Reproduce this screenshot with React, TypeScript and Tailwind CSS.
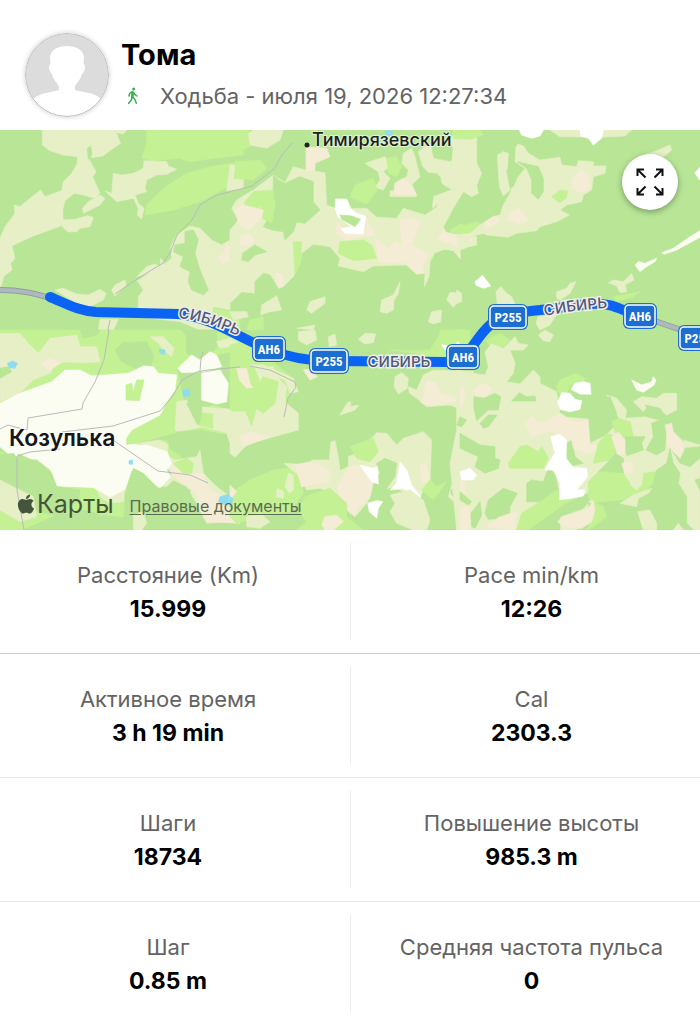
import { FaApple } from "react-icons/fa";

const FOREST = "#b8e696";
const BRIGHT = "#c3f194";
const MEADOW = "#e6efc6";
const SAND = "#f4ecd4";
const TOWN = "#fcfdf2";
const SNOW = "#ffffff";
const WATER = "#8fdcf0";

type Shape = [fill: string, points: string];
type Tile = { x: number; y: number; shapes: Shape[] };

/* Land cover, in tiles of 240 x 200 map units; points are in thirds of a unit. */
const tiles: Tile[] = [
  {
    x: 0,
    y: 0,
    shapes: [
      [BRIGHT, "440,0 730,0 730,75 640,85 570,95 540,85 460,92 425,85 440,40"],
      [BRIGHT, "435,255 440,225 490,175 560,130 640,108 700,100 685,170 600,215 520,240"],
      [MEADOW, "127,0 345,0 362,40 330,62 308,78 275,83 262,60 268,90 288,125 278,140 300,190 283,205 250,195 222,190 195,212 188,240 190,285 150,300 100,318 62,335 36,348 45,385 32,400 36,420 12,438 0,480 0,325 15,290 45,250 42,225 60,230 90,205 122,180 135,200 185,182 190,155 215,130 232,100 232,80 190,75 150,62 127,45"],
      [FOREST, "262,55 272,48 276,75 265,88"],
      [MEADOW, "250,250 248,235 265,215 300,195 315,205 300,225 270,240"],
      [MEADOW, "185,270 188,292 205,306 230,305 240,295 270,290 280,262 262,257 225,268"],
      [MEADOW, "315,183 335,190 340,130 365,135 400,130 430,115 432,92 500,95 505,108 530,118 500,133 470,135 440,150 435,175 440,185 405,195 415,220 432,235 425,268 412,255 415,235 400,205 350,215"],
      [MEADOW, "345,0 380,0 370,12 350,8"],
      [MEADOW, "690,105 712,110 700,140 730,145 730,175 680,182"],
      [MEADOW, "412,452 450,430 490,405 515,385 512,350 530,315 570,288 600,295 635,330 665,345 690,330 695,300 730,270 730,480 690,520 690,540 640,530 635,560 660,600 600,600 540,575 415,560 415,500 430,480"],
      [FOREST, "555,305 580,300 595,330 585,370 600,420 625,480 610,495 575,480 565,455 570,425 540,410 550,380 520,365 525,345 555,340"],
      [SAND, "655,380 675,365 680,340 692,360 695,390 665,400"],
      [MEADOW, "335,480 345,465 375,450 378,465 345,498"],
      [MEADOW, "410,440 440,410 465,402 480,410 482,385 490,395 490,408 450,430"],
      [MEADOW, "165,480 190,475 230,492 265,495 300,478 318,490 310,510 270,530 230,520"],
      [MEADOW, "300,568 355,568 340,600 295,600"],
      [MEADOW, "705,220 720,218 725,255 703,250"],
      [BRIGHT, "640,535 720,550 720,600 660,600"],
    ],
  },
  {
    x: 230,
    y: 0,
    shapes: [
      [BRIGHT, "-25,0 55,0 60,50 20,65 -25,75"],
      [BRIGHT, "15,95 90,90 110,115 70,150 10,145"],
      [MEADOW, "55,10 70,0 160,0 150,30 110,55 60,45"],
      [MEADOW, "0,105 15,105 10,145 0,150"],
      [MEADOW, "0,300 25,270 5,235 20,210 70,180 130,135 165,158 190,110 228,120 285,128 290,225 320,237 410,235 440,262 500,265 520,235 585,255 620,232 625,205 665,185 720,170 700,185 670,235 640,290 650,310 740,320 740,345 718,350 690,360 692,388 670,362 645,358 615,368 600,395 597,440 583,470 585,430 560,432 530,405 430,408 400,425 325,408 330,385 300,350 250,343 215,370 210,400 190,440 160,470 135,465 110,430 90,440 75,490 35,485 0,515"],
      [FOREST, "130,135 145,150 165,160 210,140 250,155 250,215 270,240 225,280 200,275 190,305 165,330 160,305 125,300 100,290 130,240"],
      [BRIGHT, "45,215 70,185 130,180 135,230 125,280 95,265 90,225 75,250 45,240"],
      [FOREST, "75,470 75,455 100,430 120,435 138,465 145,500 100,510 75,495"],
      [MEADOW, "405,100 465,80 485,105 460,125 480,145 460,180 435,172 450,150 445,125"],
      [MEADOW, "480,200 480,182 500,185 495,160 530,140 535,120 515,100 520,70 545,55 555,80 565,120 570,140 545,165 560,200"],
      [MEADOW, "565,65 600,40 610,85 660,95 680,85 660,30 680,0 740,0 740,180 665,190 625,215 610,235 590,205 660,180 630,155 625,130 580,125 575,100"],
      [FOREST, "575,108 600,135 630,140 635,165 662,178 610,198 605,228 570,225"],
      [SAND, "490,195 495,160 520,145 545,165 560,195"],
      [SAND, "228,50 290,55 300,80 255,100 255,122 228,124"],
      [SAND, "15,235 40,225 100,240 95,265 55,300 25,280"],
      [SAND, "30,320 60,310 75,335 55,350 30,345"],
      [SAND, "320,275 355,310 405,310 410,270 435,315 345,330 318,310"],
      [SAND, "435,320 470,355 500,335 515,345 510,270 540,265 575,275 560,300 545,345 600,375 580,405 580,430 560,432 525,400 445,395"],
      [SAND, "640,305 700,318 730,330 690,350 640,335 620,325"],
      [SAND, "135,430 160,430 160,470 145,475"],
      [BRIGHT, "360,200 375,165 430,145 442,180 410,222"],
      [BRIGHT, "330,335 400,330 425,345 440,385 370,392 325,370"],
      [BRIGHT, "190,335 215,335 212,400 195,430"],
      [BRIGHT, "660,300 690,282 725,290 725,312 665,310"],
      [BRIGHT, "470,85 500,80 515,110 500,140 475,130"],
      [SNOW, "317,207 350,207 362,235 378,250 407,258 400,312 345,310 333,296 365,290 325,262 315,235"],
      [FOREST, "330,255 365,258 392,268 375,290 335,268"],
      [FOREST, "38,370 75,345 110,365 75,375 55,395 35,390"],
      [MEADOW, "230,540 240,515 285,500 285,520 245,550"],
      [MEADOW, "450,545 455,510 490,495 510,455 505,490 492,510 490,540 470,550"],
      [MEADOW, "595,575 605,545 635,540 632,575 610,582"],
      [MEADOW, "650,510 660,487 693,490 690,510 670,532"],
      [MEADOW, "92,555 95,525 140,497 155,540 120,545"],
      [MEADOW, "0,545 50,545 55,560 10,570"],
      [BRIGHT, "60,570 100,560 100,600 50,600"],
      [MEADOW, "200,595 255,585 250,600"],
      [WATER, "465,5 475,0 488,5 485,18 468,15"],
    ],
  },
  {
    x: 460,
    y: 0,
    shapes: [
      [BRIGHT, "-20,0 60,0 70,15 30,28 -20,25"],
      [MEADOW, "-20,50 35,60 45,90 65,130 50,165 55,190 35,200 -5,175 -30,150"],
      [BRIGHT, "0,290 50,275 65,285 20,310 0,315"],
      [MEADOW, "270,0 515,0 495,18 420,22 300,20"],
      [SNOW, "178,0 250,0 240,18 215,25 185,15"],
      [SNOW, "360,0 430,0 425,25 400,45 385,25 362,18"],
      [MEADOW, "112,75 130,65 145,70 142,120 150,180 130,198 118,170"],
      [MEADOW, "168,50 175,42 190,48 205,70 240,90 300,82 305,105 350,110 355,92 400,95 400,108 438,108 435,130 400,140 395,180 370,195 365,215 320,225 300,240 328,255 290,275 240,290 230,302 170,310 145,322 80,315 70,310 30,320 20,345 0,360 -10,315 30,310 60,285 100,260 120,255 130,225 150,190 160,160 195,115 165,95"],
      [FOREST, "172,95 235,110 250,145 250,185 235,208 215,190 215,150 200,115"],
      [FOREST, "140,120 165,100 180,120 160,170 150,170"],
      [BRIGHT, "275,200 300,180 323,182 318,205 300,218"],
      [SAND, "335,150 365,115 390,140 390,175 365,188 335,175"],
      [SAND, "142,270 150,245 180,235 205,270 185,285"],
      [SAND, "75,275 105,258 120,270 100,290 78,295"],
      [MEADOW, "560,72 590,62 630,45 635,60 610,80"],
      [SNOW, "45,455 68,436 92,468 70,475 48,465"],
      [MEADOW, "108,485 122,470 140,490 155,500 165,522 112,525"],
      [MEADOW, "290,505 290,485 320,475 330,460 348,455 330,490 300,510"],
      [MEADOW, "235,560 290,552 270,585 240,600 228,580"],
      [MEADOW, "445,458 460,450 490,455 505,440 515,430 522,450 495,465 500,485 480,488 470,468"],
      [TOWN, "525,405 535,395 555,400 590,385 585,395 560,410 540,425"],
      [TOWN, "605,368 640,355 690,320 720,302 720,322 650,360 612,373"],
      [BRIGHT, "460,500 540,485 520,500 470,515"],
      [SNOW, "705,128 720,112 720,150 712,140"],
      [MEADOW, "-10,480 5,490 5,515 -10,520"],
    ],
  },
  {
    x: 0,
    y: 200,
    shapes: [
      [BRIGHT, "0,0 720,0 720,60 600,85 530,115 560,250 640,225 720,250 720,310 520,310 390,345 180,200 0,220"],
      [FOREST, "545,0 650,0 650,55 605,90 560,70 560,20"],
      [FOREST, "345,60 370,38 440,35 462,80 450,115 415,120 365,95"],
      [MEADOW, "0,10 60,10 85,40 115,70 150,25 230,15 240,50 290,50 300,95 250,100 190,100 150,130 100,150 60,190 0,215"],
      [SAND, "123,100 145,85 180,95 175,110 145,122"],
      [FOREST, "0,115 25,110 35,125 0,145"],
      [FOREST, "240,0 300,0 290,15 250,25"],
      [BRIGHT, "150,145 160,115 190,98 230,100 290,100 285,130 210,140"],
      [MEADOW, "450,20 490,20 522,55 515,80 490,60 475,40"],
      [MEADOW, "650,35 690,25 720,40 720,60 690,50 660,55"],
      [TOWN, "0,220 60,190 155,155 195,120 240,120 275,138 385,130 430,108 460,110 475,130 530,135 525,180 500,215 480,255 395,300 378,325 378,345 410,342 440,355 500,355 512,400 490,425 512,440 480,475 445,450 395,420 375,480 330,505 280,475 170,470 155,430 125,400 55,370 45,390 0,350"],
      [BRIGHT, "410,345 500,330 510,360 540,375 545,395 510,385 500,345"],
      [TOWN, "533,115 575,75 600,90 630,65 650,75 665,110 610,125 545,128"],
      [TOWN, "605,130 660,120 685,160 680,215 650,222 605,210"],
      [BRIGHT, "378,165 395,160 400,185 410,150 432,150 418,212 378,210"],
      [MEADOW, "530,215 560,210 575,250 590,285 640,300 640,250 590,245 600,230 720,240 720,350 690,340 680,310 610,290 540,305 525,300"],
      [FOREST, "560,220 605,215 605,255 595,285 580,260"],
      [FOREST, "505,330 535,305 600,300 650,310 720,360 720,500 650,500 640,460 610,430 590,400 595,365 560,360 520,345"],
      [MEADOW, "415,340 480,330 505,345 500,375 525,390 590,380 600,360 610,430 650,470 690,500 720,570 620,580 590,520 560,470 520,450 490,480 490,460 515,430 500,410 490,360"],
      [SAND, "500,395 550,430 610,430 630,480 690,510 700,540 640,560 600,540 590,490 560,465 520,440"],
      [TOWN, "410,345 440,345 500,365 515,400 500,420 512,440 480,475 470,430 410,400"],
      [BRIGHT, "520,400 560,385 580,400 575,430 550,430"],
      [FOREST, "390,470 400,415 430,430 470,470 440,480"],
      [BRIGHT, "0,365 45,390 110,390 150,420 170,470 280,475 330,505 375,490 370,560 330,600 0,600"],
      [FOREST, "0,375 40,370 55,390 110,390 155,430 170,470 240,480 235,510 180,560 100,540 70,490 0,450"],
      [MEADOW, "0,450 40,470 100,500 110,560 60,575 0,540"],
      [MEADOW, "290,480 330,505 375,480 370,515 330,520 300,500"],
      [FOREST, "70,600 160,560 260,540 300,555 385,565 430,545 440,600"],
      [FOREST, "375,490 450,480 530,465 570,480 570,560 530,600 440,600 430,545 380,530"],
      [MEADOW, "400,555 430,545 440,580 425,600 400,600"],
      [SAND, "600,540 650,555 720,545 720,580 620,575"],
      [WATER, "22,100 38,93 52,100 45,115 28,113"],
      [WATER, "478,58 495,60 495,73 480,70"],
      [WATER, "548,180 568,178 570,197 550,200"],
      [WATER, "387,392 398,390 398,403 387,402"],
      [WATER, "660,500 690,492 697,515 675,525 655,515"],
    ],
  },
  {
    x: 230,
    y: 200,
    shapes: [
      [BRIGHT, "0,45 60,30 130,95 170,130 195,150 170,220 120,235 65,280 0,240"],
      [MEADOW, "60,105 100,105 190,145 205,185 180,190 165,150 100,125"],
      [SAND, "20,115 50,115 60,160 68,172 50,175 28,150"],
      [MEADOW, "75,115 130,110 150,150 170,170 165,215 205,250 205,300 150,315 80,335 50,345 15,382 0,370 0,245 45,245 65,290 80,240 75,200 90,150"],
      [BRIGHT, "75,180 100,140 145,155 135,220 100,250 70,230"],
      [SAND, "30,320 60,305 120,320 40,350"],
      [MEADOW, "205,5 255,0 260,30 230,45 205,30"],
      [MEADOW, "295,20 315,12 320,45 298,50"],
      [MEADOW, "385,28 405,10 437,12 430,38 405,42"],
      [SAND, "220,120 240,118 262,140 240,150"],
      [MEADOW, "330,255 352,218 362,215 362,230 386,225 375,240"],
      [MEADOW, "492,170 495,140 515,128 535,145 532,175 505,192"],
      [BRIGHT, "480,60 600,60 630,10 640,45 720,70 720,0 670,0 690,30 650,90 560,70"],
      [SNOW, "635,45 655,25 680,25 690,45 645,60"],
      [MEADOW, "535,170 560,180 580,135 610,120 730,125 730,290 700,320 685,295 715,270 700,240 660,225 590,230 560,205 538,190"],
      [SAND, "575,220 590,150 620,160 630,190 700,210 610,228"],
      [BRIGHT, "0,490 60,450 130,420 190,412 215,450 220,490 180,545 100,560 20,580 0,560"],
      [MEADOW, "162,400 235,405 245,390 298,390 300,365 303,335 315,332 325,380 330,422 355,410 355,380 380,370 390,350 430,320 440,308 470,310 500,345 520,325 580,305 605,330 600,450 580,480 570,505 540,500 520,485 490,470 460,480 430,485 410,520 380,555 360,550 330,500 270,475 230,480 210,440"],
      [SAND, "195,405 240,395 300,420 300,455 215,470"],
      [SAND, "320,475 355,410 395,405 440,430 430,480 405,520 385,530 375,560 350,540 330,505"],
      [BRIGHT, "360,350 430,325 445,365 420,395 380,385"],
      [FOREST, "440,400 465,385 500,400 495,440 470,475 440,520 420,515 430,465 450,430"],
      [SNOW, "390,405 430,415 442,410 445,462 425,455"],
      [SNOW, "480,480 500,460 510,395 530,420 545,465 572,500 560,505 520,475"],
      [SNOW, "413,520 440,512 458,515 445,535 440,565 418,545"],
      [SAND, "570,400 590,405 600,450 575,460"],
      [BRIGHT, "575,480 600,450 620,470 650,455 610,510"],
      [MEADOW, "480,495 540,480 580,510 600,570 590,600 550,600 500,580 480,545 495,520"],
      [MEADOW, "655,500 665,465 690,460 680,370 700,355 740,370 740,600 690,590 700,540"],
      [FOREST, "662,480 680,470 715,495 712,525 665,495"],
      [SNOW, "685,418 740,415 735,450 700,445"],
      [MEADOW, "165,470 175,430 190,435 190,480 178,490"],
      [SAND, "0,465 20,485 0,510"],
      [MEADOW, "138,500 142,475 162,485 160,505"],
      [BRIGHT, "205,540 225,500 300,475 350,520 350,560 400,600 200,600 230,575"],
      [SAND, "275,585 285,560 320,555 340,575 310,600 285,600"],
      [MEADOW, "50,560 90,550 120,575 90,595 50,590"],
      [WATER, "0,500 8,505 5,530 0,530"],
    ],
  },
  {
    x: 460,
    y: 200,
    shapes: [
      [BRIGHT, "-60,0 20,0 -20,50 -60,40"],
      [BRIGHT, "80,30 120,10 150,30 130,50 90,50"],
      [MEADOW, "-10,120 40,130 75,135 85,110 75,65 95,42 130,55 165,20 175,40 205,45 190,60 150,60 165,100 160,130 140,155 180,162 220,120 240,140 240,160 290,185 300,250 390,265 390,340 440,315 480,270 440,195 470,205 500,240 495,265 560,260 620,275 670,330 720,345 720,600 -10,600 -30,400 -10,300"],
      [FOREST, "300,245 340,230 380,205 450,200 470,250 400,330 385,330 385,265 320,260"],
      [FOREST, "635,360 720,350 720,385 690,410 660,400"],
      [FOREST, "42,200 70,205 105,190 122,200 115,240 85,240 50,272 42,235"],
      [FOREST, "155,213 178,188 200,200 225,198 228,213"],
      [FOREST, "60,280 85,255 112,255 85,290 70,295"],
      [FOREST, "0,310 60,345 105,350 105,385 120,390 115,415 75,430 45,410 55,380 0,355"],
      [FOREST, "0,260 20,270 5,290 -10,285"],
      [BRIGHT, "145,400 180,350 200,345 235,365 245,350 265,385 250,415 150,415"],
      [FOREST, "200,460 215,450 250,455 265,415 285,430 300,505 270,515 200,515"],
      [FOREST, "75,550 85,510 130,475 172,490 150,530 148,565 85,568"],
      [FOREST, "32,550 60,515 65,555 45,595 35,590"],
      [FOREST, "0,485 35,515 25,525 0,510"],
      [BRIGHT, "170,600 185,550 240,515 290,480 320,510 385,500 380,520 250,570 210,600"],
      [FOREST, "205,600 250,570 320,520 385,490 390,510 370,535 300,560 300,600"],
      [FOREST, "315,345 335,330 345,380 370,400 325,410"],
      [SAND, "195,285 215,255 235,280 265,270 300,250 340,275 385,270 390,350 405,340 415,360 380,370 340,355 335,330 290,320 280,300 215,320"],
      [SAND, "40,180 70,160 95,175 80,200 45,195"],
      [SAND, "0,170 15,180 10,225 0,230"],
      [SAND, "0,450 15,455 15,490 0,480"],
      [SAND, "0,530 30,530 30,600 0,600"],
      [SAND, "75,590 120,560 170,545 165,600 130,600"],
      [MEADOW, "235,15 255,0 280,15 270,35 250,32"],
      [BRIGHT, "290,170 300,150 345,130 375,145 370,160 330,165 320,190 295,190"],
      [SNOW, "333,178 345,160 370,155 390,160 393,193 360,192"],
      [SNOW, "293,215 305,188 330,190 345,208 365,212 360,238 330,245 300,238"],
      [SNOW, "272,320 298,313 320,330 318,385 340,412 380,415 383,440 350,480 375,480 370,498 298,510 300,460 280,420 255,420 268,395 285,370"],
      [SNOW, "0,425 30,415 50,435 40,450 5,450"],
      [TOWN, "515,150 545,165 575,155 580,140 588,150 582,165 550,187 530,180"],
      [FOREST, "500,235 560,225 600,255 640,280 670,330 670,360 640,360 620,300 600,270 560,260 545,230"],
      [MEADOW, "520,215 545,200 590,205 610,190 650,190 650,240 620,255 600,240 565,225 550,245"],
      [FOREST, "555,225 600,235 615,258 575,255"],
      [BRIGHT, "415,340 440,310 470,320 455,275 475,265 510,275 520,320 500,330 500,370 460,370 450,390 400,400"],
      [FOREST, "495,320 555,320 545,340 550,360 500,377"],
      [FOREST, "575,280 600,270 620,290 615,360 590,375 558,360 580,320"],
      [SAND, "455,320 475,305 495,330 495,370 475,380"],
      [SAND, "615,285 635,280 640,305 670,335 672,360 660,385 625,350 620,310"],
      [FOREST, "415,425 450,390 465,370 490,385 490,430 450,430"],
      [BRIGHT, "385,500 385,455 415,425 490,430 520,475 550,430 590,425 580,460 540,500 480,520 400,515"],
      [MEADOW, "510,430 550,430 545,465 530,480 512,465"],
      [SAND, "485,400 520,395 515,430 495,430"],
      [FOREST, "385,520 480,512 540,500 580,460 590,420 620,400 630,355 640,400 660,430 655,460 680,500 680,580 700,600 350,600 400,575"],
      [BRIGHT, "400,515 430,530 440,560 400,590 380,600 400,560"],
      [SAND, "293,575 310,558 350,550 385,535 400,510 405,540 395,575 365,595 310,590"],
      [MEADOW, "480,520 520,495 575,475 565,490 535,505 530,530"],
      [MEADOW, "533,545 570,540 590,580 590,600 550,600"],
      [MEADOW, "640,600 655,580 670,600"],
      [FOREST, "705,450 720,445 720,480"],
    ],
  },
];

function LandCover() {
  return (
    <g>
      <rect width="700" height="400" fill={FOREST} />
      {tiles.map((tile) => (
        <g key={`${tile.x}-${tile.y}`} transform={`translate(${tile.x} ${tile.y}) scale(0.33333)`}>
          {tile.shapes.map(([fill, points], i) => (
            <polygon key={i} points={points} fill={fill} stroke={fill} strokeWidth="2" strokeLinejoin="round" />
          ))}
        </g>
      ))}
    </g>
  );
}

function Roads() {
  return (
    <g fill="none" stroke="#b9bbbd" strokeWidth="1">
      <path d="M292 13 L282 25 L274 39 L252 56 L237 60 L217 65 L200 75 L192 90 L177 105 L170 123 L163 133 L137 149 L115 164" />
      <path d="M109 200 L104 230 L95 252 L83 273 L82 279 L28 288 L27 300 L8 295 L0 299" />
      <path d="M62 302 L113 296 L160 281 L172 267 L182 250 L197 242 L208 240 L240 237" />
      <path d="M200 241 L201 229 L203 222" />
      <path d="M110 308 L158 341 L190 345 L208 353" />
      <path d="M17 326 L30 322 L60 319 M17 326 L17 360 L24 400" />
      <path d="M250 236 L270 240 L295 252 L296 257 L288 268 L284 287" />
      <path d="M110 190 L108 200" />
      <path d="M0 160 C20 160 33 163 50 168" stroke="#929da3" strokeWidth="6" />
      <path d="M0 160 C20 160 33 163 50 168" stroke="#aeb8bd" strokeWidth="4" />
      <path d="M652 190 L690 203" stroke="#929da3" strokeWidth="6" />
      <path d="M652 190 L690 203" stroke="#aeb8bd" strokeWidth="4" />
    </g>
  );
}

function Shield({ x, y, width, label }: { x: number; y: number; width: number; label: string }) {
  return (
    <g transform={`translate(${x} ${y})`}>
      <rect x={-width / 2} y="-13" width={width} height="26" rx="6" fill="#1c6fd0" />
      <rect x={-width / 2 + 2} y="-11" width={width - 4} height="22" rx="4" fill="#1c6fd0" stroke="#fff" strokeWidth="1.5" />
      <text
        y="5"
        textAnchor="middle"
        className="fill-white font-['Liberation_Sans_Narrow','Roboto_Condensed',Roboto,sans-serif] text-[13px] font-bold"
      >
        {label}
      </text>
    </g>
  );
}

const roadName =
  "fill-[#53567c] stroke-[#eef0ea] stroke-[3px] [paint-order:stroke] font-[Inter,sans-serif] text-[15px] font-medium";

function RouteMap() {
  return (
    <svg
      viewBox="0 0 700 400"
      preserveAspectRatio="xMidYMid slice"
      className="block h-[400px] w-full"
      role="img"
      aria-label="Карта маршрута"
    >
      <LandCover />
      <Roads />
      <path
        d="M50 167 C65 173 78 181 96 182 L178 184 C215 188 238 208 268 219 C285 226 305 231 330 231 L448 232 C472 232 474 202 500 188 C520 180 555 179 590 174 C612 172 622 181 640 186"
        fill="none"
        stroke="#0a63f2"
        strokeWidth="10"
        strokeLinecap="round"
        strokeLinejoin="round"
      />
      <defs>
        <path id="name-west" d="M178 188 C200 190 220 197 246 210" />
        <path id="name-east" d="M545 186 C565 182 590 178 616 178" />
      </defs>
      <text className={roadName}>
        <textPath href="#name-west">СИБИРЬ</textPath>
      </text>
      <text x="399" y="237" textAnchor="middle" className={roadName}>
        СИБИРЬ
      </text>
      <text className={roadName}>
        <textPath href="#name-east">СИБИРЬ</textPath>
      </text>
      <Shield x={269} y={219} width={34} label="АН6" />
      <Shield x={329} y={231} width={40} label="Р255" />
      <Shield x={463} y={227} width={34} label="АН6" />
      <Shield x={508} y={187} width={40} label="Р255" />
      <Shield x={640} y={186} width={34} label="АН6" />
      <Shield x={698} y={208} width={40} label="Р255" />
      <circle cx="307" cy="15" r="2.5" fill="#1d2a1b" />
      <text
        x="312"
        y="16"
        className="fill-[#1c1f1c] stroke-white/60 stroke-2 [paint-order:stroke] font-[Inter,sans-serif] text-[18px] font-medium"
      >
        Тимирязевский
      </text>
      <text
        x="9"
        y="316"
        className="fill-[#161616] stroke-white/70 stroke-2 [paint-order:stroke] font-[Inter,sans-serif] text-[23px] font-semibold"
      >
        Козулька
      </text>
    </svg>
  );
}

function Avatar() {
  return (
    <svg
      viewBox="0 0 84 84"
      className="size-[84px] shrink-0 rounded-full shadow-[0_0_5px_rgba(0,0,0,0.2)]"
      role="img"
      aria-label="Тома"
    >
      <defs>
        <clipPath id="avatar-clip">
          <circle cx="42" cy="42" r="41" />
        </clipPath>
      </defs>
      <circle cx="42" cy="42" r="41" fill="#dcdcdc" />
      <path
        clipPath="url(#avatar-clip)"
        fill="#fff"
        d="M42 13 C51 13 59 17 59 25 L58.500 31 C61 32 60 39 57 41 C55 48 51 50 50 54 L50 57 C55 59 70 59 76 66 L84 84 L0 84 L8 66 C16 59 29 59 34 57 L34 54 C32 49 28 47 27 41 C24 39 23 32 25.500 31 L25 25 C25 17 33 13 42 13Z"
      />
      <circle cx="42" cy="42" r="41.500" fill="none" stroke="#a8a8a8" strokeWidth="0.800" />
    </svg>
  );
}

function WalkIcon() {
  return (
    <svg
      viewBox="0 0 60 54"
      className="h-[18px] w-5"
      fill="none"
      stroke="#38b24c"
      strokeWidth="4.500"
      strokeLinecap="round"
      strokeLinejoin="round"
      aria-hidden="true"
    >
      <circle cx="32" cy="6" r="4.500" fill="#38b24c" stroke="none" />
      <path d="M29 16 L28 30" strokeWidth="8" />
      <path d="M27 15 L20 19 L18 27" />
      <path d="M32 17 L36 23 L42 27" />
      <path d="M27 31 L25 39 L17 49" />
      <path d="M30 31 L36 38 L40 49" />
    </svg>
  );
}

function ExpandIcon() {
  return (
    <svg viewBox="0 0 28 28" className="size-7" fill="none" stroke="#111" strokeWidth="2" aria-hidden="true">
      <path d="M8 1.500H1.500V8M1.500 1.500L9.500 9.500" />
      <path d="M20 1.500H26.500V8M26.500 1.500L18.500 9.500" />
      <path d="M8 26.500H1.500V20M1.500 26.500L9.500 18.500" />
      <path d="M20 26.500H26.500V20M26.500 26.500L18.500 18.500" />
    </svg>
  );
}

type Stat = { label: string; value: string };

const rows: [Stat, Stat][] = [
  [
    { label: "Расстояние (Km)", value: "15.999" },
    { label: "Pace min/km", value: "12:26" },
  ],
  [
    { label: "Активное время", value: "3 h 19 min" },
    { label: "Cal", value: "2303.3" },
  ],
  [
    { label: "Шаги", value: "18734" },
    { label: "Повышение высоты", value: "985.3 m" },
  ],
  [
    { label: "Шаг", value: "0.85 m" },
    { label: "Средняя частота пульса", value: "0" },
  ],
];

function StatCell({ stat, className }: { stat: Stat; className: string }) {
  return (
    <div className={`pt-[15px] pb-3.5 text-center ${className}`}>
      <dt className="text-[22px] leading-[34px] text-[#636363]">{stat.label}</dt>
      <dd className="text-[23px] leading-[34px] font-bold text-black">{stat.value}</dd>
    </div>
  );
}

export default function App() {
  return (
    <main className="min-h-screen bg-white font-[Inter,'Noto_Sans',sans-serif]">
      <header className="flex items-center gap-3 px-[25px] pt-[33px] pb-[13px]">
        <Avatar />
        <div>
          <h1 className="text-[29px] leading-[42px] font-bold text-black">Тома</h1>
          <p className="flex items-center gap-[17px] pl-0.5 text-[22px] leading-10 text-[#636363]">
            <WalkIcon />
            Ходьба - июля 19, 2026 12:27:34
          </p>
        </div>
      </header>

      <section className="relative overflow-hidden" aria-label="Маршрут">
        <RouteMap />
        <button
          type="button"
          aria-label="Развернуть карту"
          className="absolute top-6 right-[22px] flex size-14 items-center justify-center rounded-full bg-white shadow-[0_2px_6px_rgba(0,0,0,0.35)]"
        >
          <ExpandIcon />
        </button>
        <div className="absolute bottom-2 left-[15px] flex items-center gap-4 text-[#46543c]">
          <span className="flex items-center text-[25px] leading-9">
            <FaApple className="size-[22px]" aria-hidden="true" />
            Карты
          </span>
          <a href="#legal" className="pt-1 text-[16px] leading-6 text-[#5c6b50] underline underline-offset-2">
            Правовые документы
          </a>
        </div>
      </section>

      <dl>
        {rows.map(([left, right], i) => (
          <div
            key={left.label}
            className={`grid grid-cols-2 py-[13px] ${i === 0 ? "border-b border-[#cfcfcf]" : i < rows.length - 1 ? "border-b border-[#e6e6e6]" : ""}`}
          >
            <StatCell stat={left} className="pr-3.5" />
            <StatCell stat={right} className="border-l border-[#ececec] pl-3" />
          </div>
        ))}
      </dl>
    </main>
  );
}
